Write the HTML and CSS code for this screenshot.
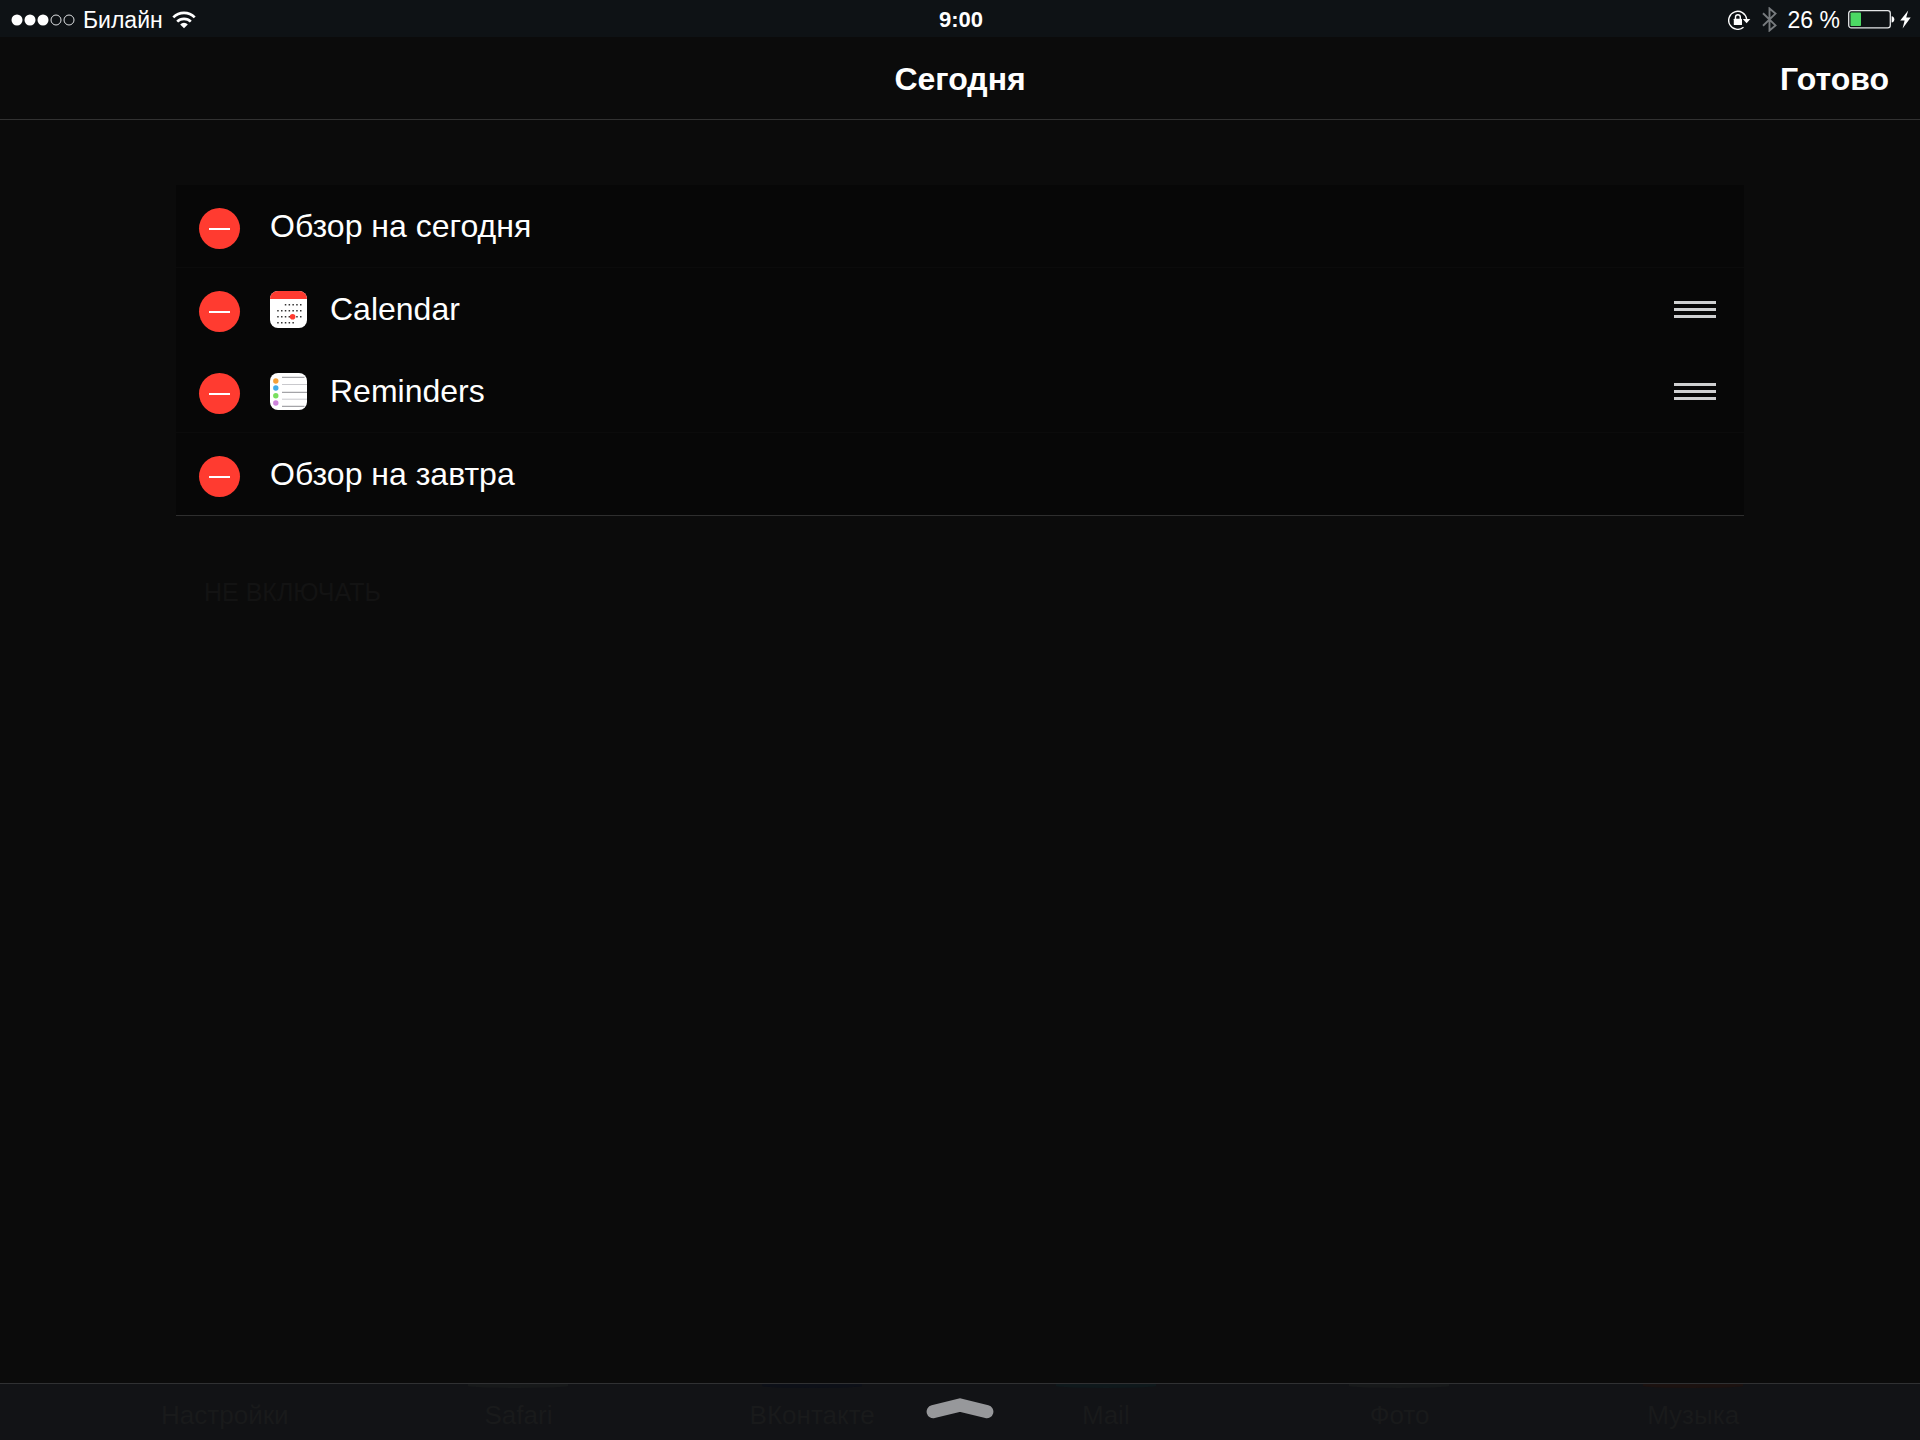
FILE: index.html
```html
<!DOCTYPE html>
<html lang="ru">
<head>
<meta charset="utf-8">
<meta name="viewport" content="width=device-width, initial-scale=1">
<title>Сегодня</title>
<link rel="stylesheet" href="styles.css">
</head>
<body>
<div class="status">
  <div class="status-side">
    <svg class="signal" width="64" height="12" viewBox="0 0 64 12" aria-hidden="true">
      <g fill="#fff"><circle cx="6" cy="6" r="5.5"/><circle cx="19" cy="6" r="5.5"/><circle cx="32" cy="6" r="5.5"/></g>
      <g fill="none" stroke="#dfe1e3" stroke-width="1"><circle cx="45" cy="6" r="5"/><circle cx="58" cy="6" r="5"/></g>
    </svg>
    <span class="carrier">Билайн</span>
    <svg width="24" height="18" viewBox="0 0 24 18" aria-hidden="true">
      <g fill="none" stroke="#fff" stroke-width="2.7"><path d="M1.3 6.4a15.1 15.1 0 0 1 21.4 0"/><path d="M5.2 10.6a9.6 9.6 0 0 1 13.6 0"/></g>
      <path d="M12 17.3 8.2 13.4a5.4 5.4 0 0 1 7.6 0z" fill="#fff"/>
    </svg>
  </div>
  <time class="clock">9:00</time>
  <div class="status-side status-right">
    <svg class="lock" width="23" height="20" viewBox="0 0 23 20" aria-hidden="true">
      <path d="M15.5 17.2A9 9 0 1 1 18.6 9" fill="none" stroke="#fff" stroke-width="1.4"/>
      <path d="M14.8 8.9h7.5l-3.7 4.3z" fill="#fff"/>
      <rect x="5.8" y="8.7" width="8.2" height="6.4" rx=".6" fill="#fff"/>
      <path d="M7.5 9V7.1a2.4 2.4 0 0 1 4.8 0V9" fill="none" stroke="#fff" stroke-width="1.4"/>
    </svg>
    <svg class="bluetooth" width="15" height="25" viewBox="0 0 15 25" aria-hidden="true">
      <path d="M1 6.3 13.5 18.4 7.5 23.5V1.5l6 5.1L1 18.7" fill="none" stroke="#777b7e" stroke-width="1.9"/>
    </svg>
    <span class="percent">26 %</span>
    <svg class="battery" width="47" height="19" viewBox="0 0 47 19" aria-hidden="true">
      <rect x=".7" y=".7" width="41.6" height="17.2" rx="2.6" fill="none" stroke="#e4e6e7" stroke-width="1.3"/>
      <rect x="2.5" y="2.5" width="10.5" height="13.6" rx=".8" fill="#4cd964"/>
      <path d="M43.6 6.2c3.6.3 3.6 6.1 0 6.4z" fill="#fff"/>
    </svg>
    <svg width="11" height="19" viewBox="0 0 11 19" aria-hidden="true"><path d="M8.2.5.2 10.4h4.4L2.6 18.4 10.7 7.6H6.2z" fill="#fff"/></svg>
  </div>
</div>

<header class="nav">
  <h1 class="title">Сегодня</h1>
  <button class="done" type="button">Готово</button>
</header>

<main class="content">
  <ul class="widgets">
    <li class="row">
      <button class="remove" type="button" aria-label="Удалить"></button>
      <span class="name">Обзор на сегодня</span>
    </li>
    <li class="row">
      <button class="remove" type="button" aria-label="Удалить"></button>
      <svg class="app" width="37" height="37" viewBox="0 0 37 37" aria-hidden="true">
        <rect width="37" height="37" rx="8" fill="#fff"/>
        <path d="M0 8a8 8 0 0 1 8-8h21a8 8 0 0 1 8 8z" fill="#ff3b30"/>
        <g stroke="#333" stroke-width="1.5" stroke-dasharray="1.5 2.3"><path d="M14.8 13.8h16.7M7.2 19.8h24.3M7.2 25.8h24.3M7.2 31.8h16.7"/></g>
        <circle cx="22.6" cy="25.8" r="2.8" fill="#ff3b30"/>
      </svg>
      <span class="name">Calendar</span>
      <button class="drag" type="button" aria-label="Переместить"><i></i><i></i><i></i></button>
    </li>
    <li class="row">
      <button class="remove" type="button" aria-label="Удалить"></button>
      <svg class="app" width="37" height="37" viewBox="0 0 37 37" aria-hidden="true">
        <rect width="37" height="37" rx="8" fill="#fff"/>
        <g stroke-width="1"><path d="M12 4.3h22.5M12 19.3h25M12 33.3h22.5" stroke="#8e8e93"/><path d="M12 11.5h25M12 26.2h25" stroke="#c9c9cd"/></g>
        <circle cx="5.8" cy="8" r="2.7" fill="#f6a138"/><circle cx="5.8" cy="15" r="2.7" fill="#43ace8"/>
        <circle cx="5.8" cy="22.8" r="2.7" fill="#79df60"/><circle cx="5.8" cy="30" r="2.7" fill="#cf85dc"/>
      </svg>
      <span class="name">Reminders</span>
      <button class="drag" type="button" aria-label="Переместить"><i></i><i></i><i></i></button>
    </li>
    <li class="row">
      <button class="remove" type="button" aria-label="Удалить"></button>
      <span class="name">Обзор на завтра</span>
    </li>
  </ul>
  <h2 class="section">НЕ ВКЛЮЧАТЬ</h2>
</main>

<footer class="dock">
  <span class="dock-app">Настройки</span>
  <span class="dock-app dock-grey">Safari</span>
  <span class="dock-app dock-navy">ВКонтакте</span>
  <span class="dock-app dock-teal">Mail</span>
  <span class="dock-app dock-grey">Фото</span>
  <span class="dock-app dock-red">Музыка</span>
  <button class="grabber" type="button" aria-label="Закрыть">
    <svg width="68" height="21" viewBox="0 0 68 21" aria-hidden="true"><path d="M7.2 13.6 34 7l26.8 6.6" fill="none" stroke="#97989b" stroke-width="13.2" stroke-linecap="round"/></svg>
  </button>
</footer>
</body>
</html>
```
FILE: styles.css
```css
* { box-sizing: border-box; }

body {
  display: flex;
  flex-direction: column;
  min-height: 100vh;
  margin: 0;
  background: #0b0b0b;
  color: #fff;
  font-family: "Liberation Sans", Arial, sans-serif;
}

button {
  padding: 0;
  border: 0;
  background: none;
  color: inherit;
  font: inherit;
}

svg { display: block; flex: none; }

.status {
  display: grid;
  grid-template-columns: 1fr auto 1fr;
  align-items: center;
  height: 37px;
  padding: 2px 9px 0 11px;
  background: #0e1215;
  font-size: 23px;
  line-height: 34px;
}

.status-side { display: flex; align-items: center; }
.status-right { justify-content: flex-end; margin-left: -2px; }
.carrier { margin: 0 9px 0 8px; }
.clock { font-size: 22px; font-weight: bold; }
.bluetooth { margin: 0 11px; }
.percent { margin-right: 8px; }
.battery { margin-right: 5px; }

.nav {
  display: grid;
  grid-template-columns: 1fr auto 1fr;
  align-items: center;
  height: 83px;
  padding: 2px 31px 0;
  border-bottom: 1px solid #323232;
  font-size: 32px;
  font-weight: bold;
}

.title { grid-column: 2; margin: 0; font-size: 32px; }
.done { justify-self: end; }

.content { flex: 1; padding: 65px 176px 0; }

.widgets {
  margin: 0;
  padding: 0;
  border-bottom: 1px solid #2e2e2e;
  list-style: none;
}

.row {
  display: flex;
  align-items: center;
  height: 82px;
  padding: 0 28px 0 23px;
  background: #070707;
}

/* Hairline above every second row */
.row:nth-child(even) {
  height: 83px;
  border-top: 1px solid #0b0b0b;
}

.remove {
  display: grid;
  place-items: center;
  width: 41px;
  height: 41px;
  margin: 5px 30px 0 0;
  border-radius: 50%;
  background: #ff3b30;
}

.remove::before {
  width: 21px;
  height: 2px;
  background: #fff;
  content: "";
}

.app { margin-right: 23px; }
.name { flex: 1; font-size: 32px; line-height: 40px; }

.drag { display: grid; gap: 4px; width: 42px; }
.drag i { height: 3px; background: #cfd0d1; }

.section {
  margin: 61px 28px 0;
  color: #131313;
  font-size: 25px;
  font-weight: normal;
  line-height: 30px;
}

.dock {
  position: relative;
  display: grid;
  grid-template-columns: repeat(6, 1fr);
  height: 57px;
  padding: 0 80px 0 78px;
  border-top: 1px solid #303133;
  background: #121316;
}

.dock-app {
  display: grid;
  grid-template-rows: 4px 1fr;
  justify-items: center;
  color: #191a1b;
  font-size: 26px;
  line-height: 54px;
}

.dock-app::before {
  width: 100px;
  height: 4px;
  border-radius: 0 0 50% 50%;
  content: "";
}

.dock-grey::before { background: #17191a; }
.dock-navy::before { background: #0d1018; }
.dock-teal::before { background: #0f191c; }
.dock-red::before { background: #1c1210; }

.grabber {
  position: absolute;
  top: 14px;
  left: 50%;
  transform: translateX(-50%);
}
```
